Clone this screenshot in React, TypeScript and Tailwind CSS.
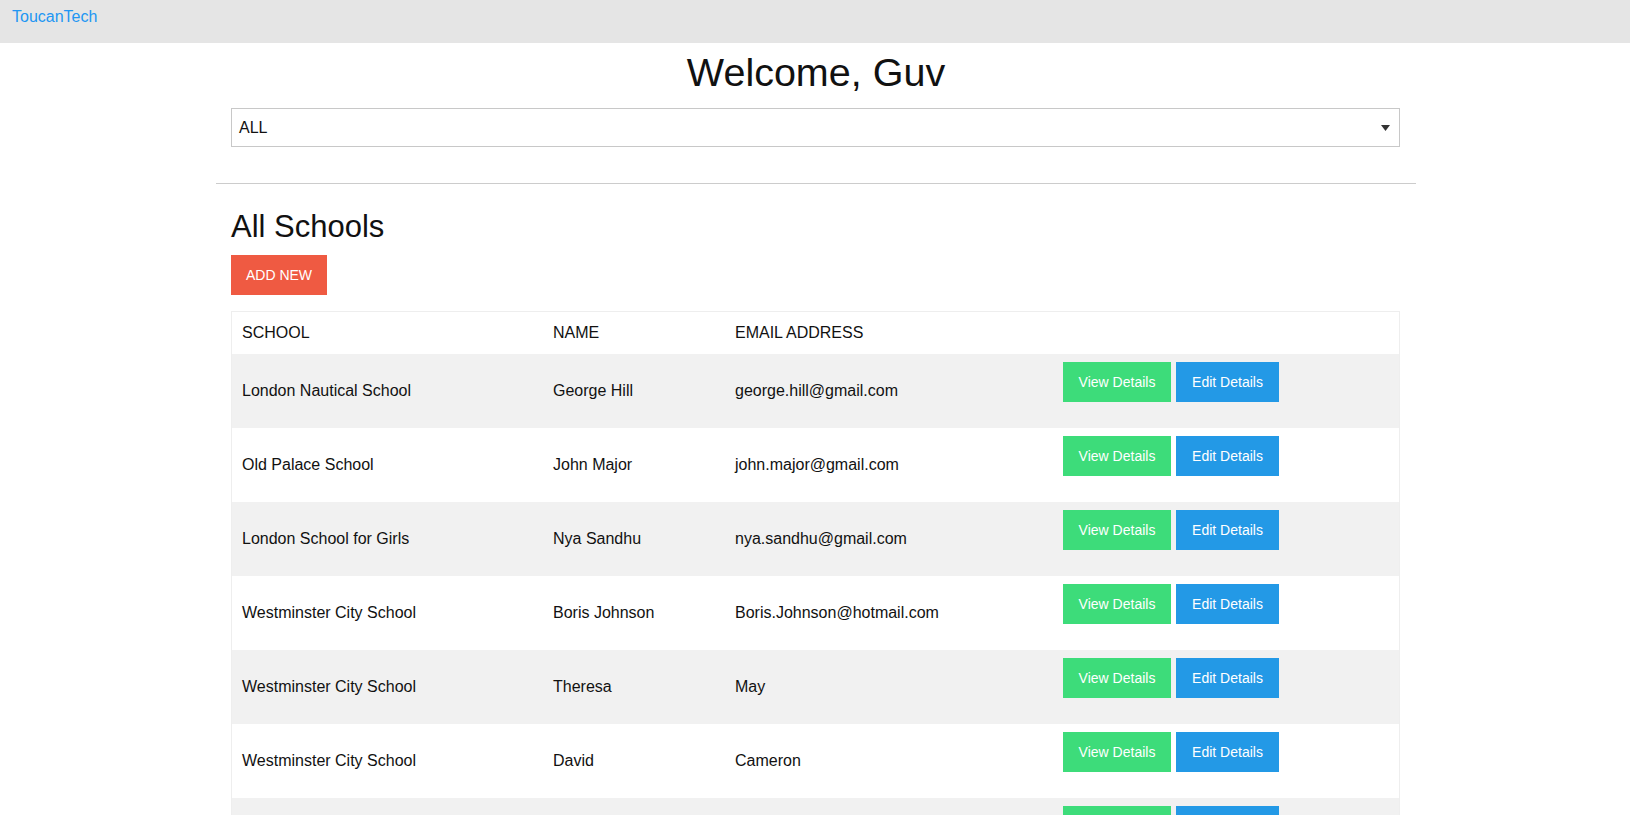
import React from "react";

interface School {
  school: string;
  name: string;
  email: string;
}

const schools: School[] = [
  { school: "London Nautical School", name: "George Hill", email: "george.hill@gmail.com" },
  { school: "Old Palace School", name: "John Major", email: "john.major@gmail.com" },
  { school: "London School for Girls", name: "Nya Sandhu", email: "nya.sandhu@gmail.com" },
  { school: "Westminster City School", name: "Boris Johnson", email: "Boris.Johnson@hotmail.com" },
  { school: "Westminster City School", name: "Theresa", email: "May" },
  { school: "Westminster City School", name: "David", email: "Cameron" },
  // next row continues below the fold
  { school: "", name: "", email: "" },
];

const font = { fontFamily: '"Liberation Sans", Helvetica, Arial, sans-serif' };

export default function App() {
  return (
    <div className="w-full min-h-screen bg-white text-[#111]" style={font}>
      {/* top bar */}
      <div className="h-[43px] w-full bg-[#e5e5e5] px-3 pt-[5px]">
        <span className="text-[16px] leading-6 text-[#2196f3]">ToucanTech</span>
      </div>

      <div className="pl-[2px]">
        <div className="w-[1200px] mx-auto">
          <h1 className="mt-[5px] text-[39.5px] leading-[48px] text-center">
            Welcome, Guv
          </h1>

          <div className="ml-[15px] mr-4 mt-3 h-[39px] border border-[#c8c8c8] flex items-center justify-between pl-[7px] pr-[9px]">
            <span className="text-[16px]">ALL</span>
            <svg width="9" height="6" viewBox="0 0 9 6">
              <path d="M0 0 L9 0 L4.5 6 Z" fill="#333" />
            </svg>
          </div>

          <div className="mt-9 border-t border-[#cccccc]"></div>

          <div className="pl-[15px] pr-4">
            <h2 className="mt-6 text-[31px] leading-[38px]">All Schools</h2>
            <button className="mt-[9px] h-10 w-24 bg-[#ef5a42] text-white text-[14px] uppercase">
              Add New
            </button>

            <div className="mt-4 border-t border-l border-r border-[#eeeeee] text-[16px]">
              <div className="grid grid-cols-[311px_182px_328px_1fr] h-[42px] items-center">
                <div className="px-[10px]">SCHOOL</div>
                <div className="px-[10px]">NAME</div>
                <div className="px-[10px]">EMAIL ADDRESS</div>
                <div></div>
              </div>
              {schools.map((s, i) => (
                <div
                  key={i}
                  className={`grid grid-cols-[311px_182px_328px_1fr] h-[74px] ${
                    i % 2 === 0 ? "bg-[#f1f1f1]" : "bg-white"
                  }`}
                >
                  <div className="px-[10px] flex items-center">{s.school}</div>
                  <div className="px-[10px] flex items-center">{s.name}</div>
                  <div className="px-[10px] flex items-center">{s.email}</div>
                  <div className="px-[10px] pt-2 flex items-start">
                    <button className="h-10 w-[108px] bg-[#3ddc7a] text-white text-[14px]">
                      View Details
                    </button>
                    <button className="ml-[5px] h-10 w-[103px] bg-[#2399e6] text-white text-[14px]">
                      Edit Details
                    </button>
                  </div>
                </div>
              ))}
            </div>
          </div>
        </div>
      </div>
    </div>
  );
}
